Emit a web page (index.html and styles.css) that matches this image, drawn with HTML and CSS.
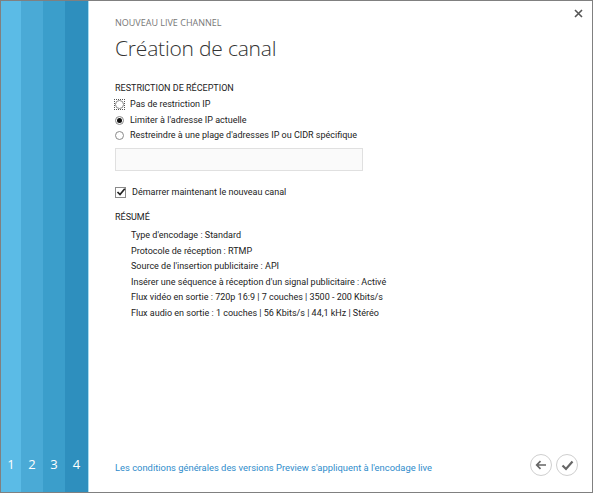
FILE: index.html
```html
<!DOCTYPE html>
<html lang="fr">
<head>
<meta charset="utf-8">
<link rel="stylesheet" href="styles.css">
</head>
<body>
<div class="win">
  <div class="steps">
    <div class="step s1"><span>1</span></div>
    <div class="step s2"><span>2</span></div>
    <div class="step s3"><span>3</span></div>
    <div class="step s4"><span>4</span></div>
  </div>
  <div class="main">
    <div class="close">
      <svg width="9" height="9" viewBox="0 0 9 9"><path d="M1 1L8 8M8 1L1 8" stroke="#555" stroke-width="1.6" fill="none"/></svg>
    </div>
    <div class="content">
      <div class="kicker">NOUVEAU LIVE CHANNEL</div>
      <h1 class="title">Création de canal</h1>
      <div class="section">RESTRICTION DE RÉCEPTION</div>
      <div class="opts">
        <div class="opt"><span class="focusbox"><span class="radio"></span></span><span>Pas de restriction IP</span></div>
        <div class="opt"><span class="radio on"></span><span>Limiter à l'adresse IP actuelle</span></div>
        <div class="opt"><span class="radio"></span><span>Restreindre à une plage d'adresses IP ou CIDR spécifique</span></div>
      </div>
      <div class="field"></div>
      <div class="opt check-row"><span class="check"><svg width="10" height="10" viewBox="0 0 10 10"><path d="M1.5 5L4 7.5L8.8 1.8" stroke="#222" stroke-width="1.7" fill="none"/></svg></span><span>Démarrer maintenant le nouveau canal</span></div>
      <div class="section sum-h">RÉSUMÉ</div>
      <ul class="summary">
        <li>Type d'encodage : Standard</li>
        <li>Protocole de réception : RTMP</li>
        <li>Source de l'insertion publicitaire : API</li>
        <li>Insérer une séquence à réception d'un signal publicitaire : Activé</li>
        <li>Flux vidéo en sortie : 720p 16:9 | 7 couches | 3500 - 200 Kbits/s</li>
        <li>Flux audio en sortie : 1 couches | 56 Kbits/s | 44,1 kHz | Stéréo</li>
      </ul>
    </div>
    <div class="footer">
      <a class="terms" href="#">Les conditions générales des versions Preview s'appliquent à l'encodage live</a>
      <div class="btns">
        <span class="cbtn"><svg width="12" height="10" viewBox="0 0 12 10"><path d="M11 5H2M5.5 1.2L1.7 5L5.5 8.8" stroke="#666" stroke-width="1.7" fill="none"/></svg></span>
        <span class="cbtn"><svg width="13" height="11" viewBox="0 0 13 11"><path d="M1.5 5.5L5 9L11.5 1.5" stroke="#666" stroke-width="2.2" fill="none"/></svg></span>
      </div>
    </div>
  </div>
</div>
</body>
</html>
```
FILE: styles.css
```css
html, body {
  margin: 0;
  padding: 0;
  background: #fff;
}
body {
  font-family: Roboto, "Open Sans", sans-serif;
  color: #222;
}
.win {
  width: 591px;
  height: 491px;
  border: 1px solid #808080;
  display: flex;
  background: #fff;
}
.steps {
  display: flex;
  width: 87px;
  border-right: 1px solid #a9dcf0;
}
.step {
  display: flex;
  align-items: flex-end;
  justify-content: center;
  padding-bottom: 19px;
  color: #fff;
  font-family: "Open Sans", sans-serif;
  font-size: 13px;
}
.s1 { width: 20px; background: #5bbbe6; }
.s2 { width: 22px; background: #4aaad6; }
.s3 { width: 22px; background: #3b9ecb; }
.s4 { width: 23px; background: #2e8fbe; }
.main {
  flex: 1;
  display: flex;
  flex-direction: column;
  position: relative;
}
.close {
  position: absolute;
  right: 9px;
  top: 8px;
  line-height: 0;
}
.content {
  padding: 15px 0 0 26px;
  flex: 1;
}
.kicker {
  font-family: "Open Sans", sans-serif;
  font-size: 9px;
  color: #777;
  line-height: 13px;
}
.title {
  margin: 4px 0 0;
  font-family: "Open Sans", sans-serif;
  font-size: 21px;
  font-weight: 300;
  color: #333;
  line-height: 30px;
  letter-spacing: -0.2px;
}
.section {
  margin-top: 19px;
  font-size: 9px;
  line-height: 13px;
  color: #222;
}
.opts {
  margin-top: 2px;
}
.opt {
  display: flex;
  align-items: center;
  gap: 6px;
  font-size: 9px;
  line-height: 15.5px;
  color: #222;
}
.focusbox {
  width: 11px;
  height: 11px;
  margin: -1px;
  border: 1px dotted #555;
  box-sizing: border-box;
  display: flex;
  align-items: center;
  justify-content: center;
}
.radio {
  width: 9px;
  height: 9px;
  border: 1px solid #8a8a8a;
  border-radius: 50%;
  box-sizing: border-box;
  position: relative;
  background: #fff;
  flex: none;
}
.radio.on::after {
  content: "";
  position: absolute;
  left: 1px;
  top: 1px;
  width: 5px;
  height: 5px;
  border-radius: 50%;
  background: #111;
}
.field {
  margin: 4px 0 0 0;
  width: 246px;
  height: 21px;
  border: 1px solid #e0e0e0;
  background: #fafafa;
}
.check-row {
  margin-top: 14px;
}
.check {
  width: 11px;
  height: 11px;
  border: 1px solid #8a8a8a;
  box-sizing: border-box;
  display: flex;
  align-items: center;
  justify-content: center;
  line-height: 0;
}
.check svg { margin: -1px -1px 0 0; }
.sum-h {
  margin-top: 11px;
}
.summary {
  list-style: none;
  margin: 4px 0 0;
  padding: 0 0 0 16px;
  font-size: 9px;
  line-height: 15.6px;
  color: #222;
}
.footer {
  display: flex;
  align-items: center;
  justify-content: space-between;
  padding: 0 14px 16px 26px;
}
.terms {
  font-size: 9.4px;
  color: #2e8ccb;
  text-decoration: none;
  margin-top: 4px;
}
.btns {
  display: flex;
  gap: 4px;
}
.cbtn {
  width: 22px;
  height: 22px;
  border: 1.5px solid #cfcfcf;
  border-radius: 50%;
  box-sizing: border-box;
  display: flex;
  align-items: center;
  justify-content: center;
}
```
